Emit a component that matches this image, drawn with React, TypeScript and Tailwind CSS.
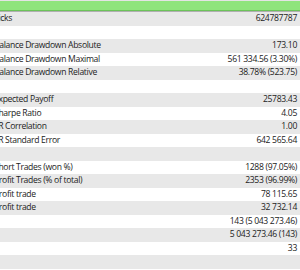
import React from "react";

const rows: [string, string][] = [
  ["Ticks", "624787787"],
  ["", ""],
  ["Balance Drawdown Absolute", "173.10"],
  ["Balance Drawdown Maximal", "561 334.56 (3.30%)"],
  ["Balance Drawdown Relative", "38.78% (523.75)"],
  ["", ""],
  ["Expected Payoff", "25783.43"],
  ["Sharpe Ratio", "4.05"],
  ["LR Correlation", "1.00"],
  ["LR Standard Error", "642 565.64"],
  ["", ""],
  ["Short Trades (won %)", "1288 (97.05%)"],
  ["Profit Trades (% of total)", "2353 (96.99%)"],
  ["Profit trade", "78 115.65"],
  ["Profit trade", "32 732.14"],
  ["", "143 (5 043 273.46)"],
  ["", "5 043 273.46 (143)"],
  ["", "33"],
  ["", ""],
];

export default function App() {
  return (
    <div className="w-[300px] h-[270px] overflow-hidden bg-white font-['Open_Sans',sans-serif] text-[8.6px] tracking-[-0.32px] text-[#222222]">
      {/* green header strip */}
      <div className="h-px bg-[#e4e4e4]" />
      <div className="h-[10px] bg-[#8fe47c] border-b border-[#6cc35a]" />
      <div className="h-px bg-[#b0b0b0]" />
      {rows.map(([label, value], i) => (
        <div
          key={i}
          className={`flex items-center justify-between h-[13.5px] overflow-hidden pr-[3px] ${i % 2 === 0 ? "bg-[#e8e8e8]" : "bg-white"}`}
        >
          <span className="-ml-[6px] whitespace-nowrap leading-none">{label}</span>
          <span className="whitespace-nowrap leading-none">{value}</span>
        </div>
      ))}
    </div>
  );
}
